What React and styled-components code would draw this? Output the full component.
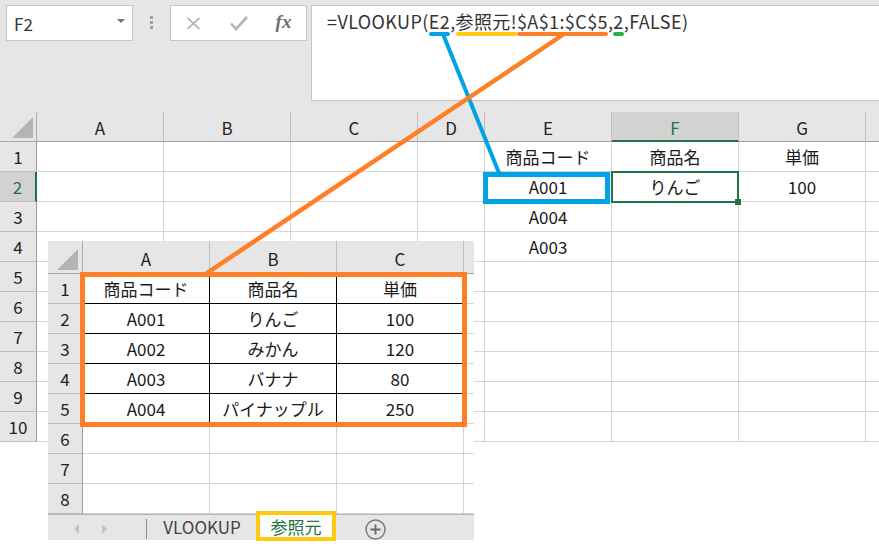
import React from 'react'
import styled, { createGlobalStyle } from 'styled-components'

const GREEN = '#217346'
const BLUE = '#00A2E8'
const ORANGE = '#FF7F27'
const YELLOW = '#FFC90E'
const LIME = '#22B14C'

const GlobalStyle = createGlobalStyle`
  html, body { margin: 0; padding: 0; background: #fff; }
  body { font-family: "Noto Sans CJK JP", "Noto Sans", sans-serif; color: #1f1f1f; }
  * { box-sizing: border-box; }
`

const Screen = styled.div`
  position: relative;
  width: 879px;
  height: 544px;
  overflow: hidden;
  background: #fff;
`

/* ---------- formula toolbar ---------- */
const Toolbar = styled.div`
  display: flex;
  align-items: flex-start;
  height: 112px;
  padding: 5px 0 0 6px;
  background: #e6e6e6;
`

const NameBox = styled.div`
  display: flex;
  align-items: center;
  justify-content: space-between;
  width: 127px;
  height: 36px;
  padding: 0 7px;
  border: 1px solid #c6c6c6;
  background: #fff;
  font-size: 17px;
  color: #333;
`

const Caret = styled.span`
  width: 0;
  height: 0;
  margin-bottom: 4px;
  border-left: 4px solid transparent;
  border-right: 4px solid transparent;
  border-top: 4px solid #707070;
`

const Grip = styled.div`
  display: flex;
  flex-direction: column;
  gap: 2px;
  margin: 11px 17px 0;
  & > i {
    width: 3px;
    height: 3px;
    background: #a0a0a0;
  }
`

const FxBox = styled.div`
  display: flex;
  width: 137px;
  height: 36px;
  border: 1px solid #c6c6c6;
  background: #fff;
`

const FxButton = styled.div`
  flex: 1;
  display: flex;
  align-items: center;
  justify-content: center;
  color: ${p => p.$tone};
`

const FxLabel = styled.span`
  font-family: "Liberation Serif", serif;
  font-style: italic;
  font-weight: bold;
  font-size: 19px;
  color: #6f6f6f;
  margin-top: -2px;
`

const FormulaBar = styled.div`
  flex: 1;
  height: 96px;
  margin-left: 4px;
  padding: 3px 0 0 15px;
  border: 1px solid #c6c6c6;
  border-right: none;
  background: #fff;
  font-size: 18px;
  line-height: 24px;
  letter-spacing: 0.4px;
  color: #333;
  white-space: nowrap;
`

const Mark = styled.span`
  position: relative;
  display: inline-block;
  &::after {
    content: '';
    position: absolute;
    left: 0;
    right: 0;
    top: calc(100% - 1px);
    height: 4px;
    border-radius: 2px;
    background: ${p => p.$color};
  }
`

/* ---------- sheet grid ---------- */
const Grid = styled.div`
  display: grid;
  grid-template-columns: ${p => p.$cols};
  grid-template-rows: ${p => p.$rows};
  width: ${p => p.$width}px;
  overflow: hidden;
  background: #fff;
  font-size: 17px;
  line-height: 1;
`

const Corner = styled.div`
  grid-row: 1;
  grid-column: 1;
  position: relative;
  background: #e6e6e6;
  border-right: 1px solid #ababab;
  border-bottom: 1px solid #ababab;
  &::after {
    content: '';
    position: absolute;
    right: ${p => p.$inset}px;
    bottom: 3px;
    border-left: 21px solid transparent;
    border-bottom: 21px solid #b4b4b4;
  }
`

const ColHead = styled.div`
  grid-row: 1;
  grid-column: ${p => p.$c};
  display: flex;
  align-items: center;
  justify-content: center;
  padding-top: 2px;
  background: ${p => (p.$sel ? '#d2d2d2' : '#e6e6e6')};
  color: ${p => (p.$sel ? GREEN : '#222')};
  border-right: 1px solid #bfbfbf;
  border-bottom: ${p => (p.$sel ? `2px solid ${GREEN}` : '1px solid #9e9e9e')};
`

const RowHead = styled.div`
  grid-row: ${p => p.$r};
  grid-column: 1;
  display: flex;
  align-items: center;
  justify-content: center;
  background: ${p => (p.$sel ? '#d2d2d2' : '#e6e6e6')};
  color: ${p => (p.$sel ? GREEN : '#222')};
  border-right: ${p => (p.$sel ? `2px solid ${GREEN}` : '1px solid #9e9e9e')};
  border-bottom: 1px solid #bfbfbf;
`

const Cell = styled.div`
  grid-row: ${p => p.$r};
  grid-column: ${p => p.$c};
  display: flex;
  align-items: center;
  justify-content: center;
  white-space: nowrap;
  color: #1a1a1a;
  border-right: 1px solid ${p => (p.$table ? '#000' : '#d4d4d4')};
  border-bottom: 1px solid ${p => (p.$table ? '#000' : '#d4d4d4')};
`

const Frame = styled.div`
  grid-row: ${p => p.$r};
  grid-column: ${p => p.$c};
  position: relative;
  z-index: 2;
  pointer-events: none;
`

const TableFrame = styled(Frame)`
  margin: -2px -3px -3px -3px;
  border: 5px solid ${ORANGE};
`

const RefFrame = styled(Frame)`
  margin: 0 2px -2px -2px;
  border: 5px solid ${BLUE};
`

const Selection = styled(Frame)`
  margin: -1px 0 -1px -1px;
  border: 2px solid ${GREEN};
`

const FillHandle = styled.span`
  position: absolute;
  right: -4px;
  bottom: -4px;
  width: 6px;
  height: 6px;
  background: ${GREEN};
`

const letters = 'ABCDEFGH'

// widths: full columns; the trailing column is cut by the window edge, so it gets no label
function Sheet({ rowHead, widths, headH, rows, width, cells, selCol, selRow, table, corner, children }) {
  const cols = `${rowHead}px ${widths.map(w => `${w}px`).join(' ')}`
  const template = `${headH}px repeat(${rows}, 30px)`
  const inTable = (r, c) => table && r >= table.r0 && r <= table.r1 && c >= table.c0 && c <= table.c1
  return (
    <Grid $cols={cols} $rows={template} $width={width}>
      <Corner $inset={corner} />
      {widths.map((w, c) => (
        <ColHead key={c} $c={c + 2} $sel={c === selCol}>
          {c < widths.length - 1 ? letters[c] : ''}
        </ColHead>
      ))}
      {Array.from({ length: rows }, (_, i) => i + 1).map(r => (
        <React.Fragment key={r}>
          <RowHead $r={r + 1} $sel={r === selRow}>
            {r}
          </RowHead>
          {widths.map((w, c) => (
            <Cell key={c} $r={r + 1} $c={c + 2} $table={inTable(r, c)}>
              {cells[`${r}-${c}`]}
            </Cell>
          ))}
        </React.Fragment>
      ))}
      {children}
    </Grid>
  )
}

/* ---------- floating source window ---------- */
const SourceWindow = styled.div`
  position: absolute;
  left: 48px;
  top: 241px;
  width: 426px;
  z-index: 3;
`

const TabBar = styled.div`
  display: flex;
  align-items: flex-start;
  height: 26px;
  padding-left: 14px;
  background: #e6e6e6;
  border-top: 1px solid #b4b4b4;
`

const NavArrow = styled.span`
  display: flex;
  align-items: center;
  justify-content: center;
  width: 28px;
  height: 25px;
  padding-top: 3px;
  &::before {
    content: '';
    width: 0;
    height: 0;
    border-top: 5px solid transparent;
    border-bottom: 5px solid transparent;
    ${p => (p.$dir === 'left' ? 'border-right' : 'border-left')}: 5px solid #c3c3c3;
  }
`

const TabDivider = styled.span`
  width: 1px;
  height: 20px;
  margin: 4px 0 0 28px;
  background: #8a8a8a;
`

const SheetTab = styled.div`
  display: flex;
  align-items: center;
  justify-content: center;
  width: ${p => p.$w}px;
  height: 22px;
  margin-left: ${p => p.$gap}px;
  font-size: 17px;
  color: ${p => (p.$active ? GREEN : '#444')};
  background: ${p => (p.$active ? '#fff' : 'transparent')};
  outline: ${p => (p.$active ? `4px solid ${YELLOW}` : 'none')};
`

const AddSheet = styled.span`
  display: flex;
  margin: 4px 0 0 33px;
`

const Callouts = styled.svg`
  position: absolute;
  left: 0;
  top: 0;
  z-index: 10;
  pointer-events: none;
`

const mainCells = {
  '1-4': '商品コード',
  '1-5': '商品名',
  '1-6': '単価',
  '2-4': 'A001',
  '2-5': 'りんご',
  '2-6': '100',
  '3-4': 'A004',
  '4-4': 'A003',
}

const products = [
  ['商品コード', '商品名', '単価'],
  ['A001', 'りんご', '100'],
  ['A002', 'みかん', '120'],
  ['A003', 'バナナ', '80'],
  ['A004', 'パイナップル', '250'],
]

const sourceCells = {}
products.forEach((row, r) => row.forEach((v, c) => (sourceCells[`${r + 1}-${c}`] = v)))

export default function App() {
  return (
    <Screen>
      <GlobalStyle />
      <Toolbar>
        <NameBox>
          F2
          <Caret />
        </NameBox>
        <Grip>
          <i />
          <i />
          <i />
        </Grip>
        <FxBox>
          <FxButton $tone="#a9a9a9">
            <svg width="15" height="13" viewBox="0 0 15 13">
              <path d="M1.5 1 L13.5 12 M13.5 1 L1.5 12" stroke="currentColor" strokeWidth="1.6" fill="none" />
            </svg>
          </FxButton>
          <FxButton $tone="#b5b5b5">
            <svg width="18" height="15" viewBox="0 0 18 15">
              <path d="M1 7.5 L6 13 L17 1" stroke="currentColor" strokeWidth="2.6" fill="none" />
            </svg>
          </FxButton>
          <FxButton>
            <FxLabel>fx</FxLabel>
          </FxButton>
        </FxBox>
        <FormulaBar>
          =VLOOKUP(<Mark $color={BLUE}>E2</Mark>,<Mark $color={YELLOW}>参照元!</Mark>
          <Mark $color={ORANGE}>$A$1:$C$5</Mark>,<Mark $color={LIME}>2</Mark>,FALSE)
        </FormulaBar>
      </Toolbar>

      <Sheet
        rowHead={37}
        widths={[127, 127, 127, 67, 127, 127, 127, 60]}
        headH={30}
        rows={10}
        width={879}
        cells={mainCells}
        selCol={5}
        selRow={2}
        corner={3}
      >
        <RefFrame $r={3} $c={6} />
        <Selection $r={3} $c={7}>
          <FillHandle />
        </Selection>
      </Sheet>

      <SourceWindow>
        <Sheet
          rowHead={35}
          widths={[127, 127, 127, 60]}
          headH={33}
          rows={8}
          width={426}
          cells={sourceCells}
          table={{ r0: 1, r1: 5, c0: 0, c1: 2 }}
          corner={4}
        >
          <TableFrame $r="2 / 7" $c="2 / 5" />
        </Sheet>
        <TabBar>
          <NavArrow $dir="left" />
          <NavArrow $dir="right" />
          <TabDivider />
          <SheetTab $w={110} $gap={0}>
            VLOOKUP
          </SheetTab>
          <SheetTab $w={72} $gap={3} $active>
            参照元
          </SheetTab>
          <AddSheet>
            <svg width="21" height="21" viewBox="0 0 21 21">
              <circle cx="10.5" cy="10.5" r="9.5" stroke="#7a7a7a" strokeWidth="1.5" fill="none" />
              <path d="M10.5 5.5 V15.5 M5.5 10.5 H15.5" stroke="#6a6a6a" strokeWidth="1.8" />
            </svg>
          </AddSheet>
        </TabBar>
      </SourceWindow>

      <Callouts width="879" height="544" viewBox="0 0 879 544">
        <line x1="443" y1="34" x2="499" y2="173" stroke={BLUE} strokeWidth="4" strokeLinecap="round" />
        <line x1="564" y1="34" x2="207" y2="273" stroke={ORANGE} strokeWidth="4.5" strokeLinecap="round" />
      </Callouts>
    </Screen>
  )
}
